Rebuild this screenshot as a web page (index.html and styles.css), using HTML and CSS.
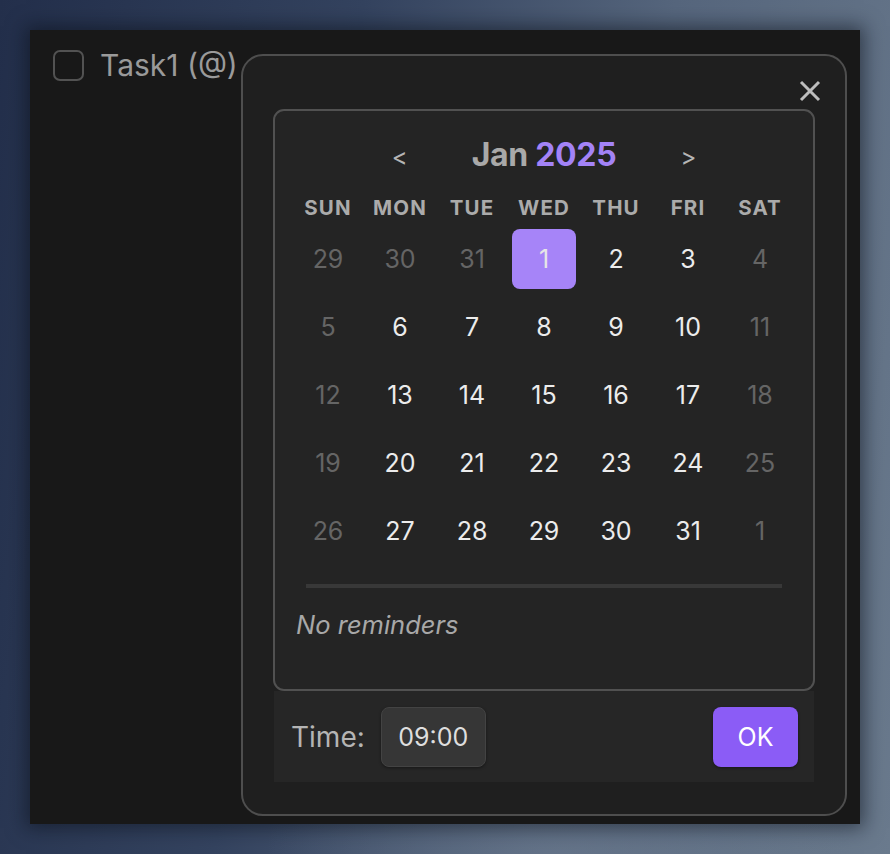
FILE: index.html
```html
<!DOCTYPE html>
<html lang="en">
<head>
<meta charset="utf-8">
<title>Reminder picker</title>
<link rel="stylesheet" href="styles.css">
</head>
<body>
<div class="panel">
  <div class="task">
    <span class="checkbox"></span>
    <span class="task-text">Task1 (@)</span>
  </div>

  <div class="modal">
    <div class="modal-top">
      <button class="close" aria-label="Close">
        <svg width="22" height="22" viewBox="0 0 22 22"><path d="M2 2 L20 20 M20 2 L2 20" stroke="#bdbdbd" stroke-width="3" stroke-linecap="butt" fill="none"/></svg>
      </button>
    </div>

    <div class="calendar">
      <div class="cal-head">
        <button class="nav">&lt;</button>
        <div class="title"><span class="month">Jan</span> <span class="year">2025</span></div>
        <button class="nav">&gt;</button>
      </div>

      <div class="grid">
        <div class="wd">SUN</div><div class="wd">MON</div><div class="wd">TUE</div><div class="wd">WED</div><div class="wd">THU</div><div class="wd">FRI</div><div class="wd">SAT</div>

        <div class="day out">29</div><div class="day out">30</div><div class="day out">31</div><div class="day sel">1</div><div class="day">2</div><div class="day">3</div><div class="day out">4</div>
        <div class="day out">5</div><div class="day">6</div><div class="day">7</div><div class="day">8</div><div class="day">9</div><div class="day">10</div><div class="day out">11</div>
        <div class="day out">12</div><div class="day">13</div><div class="day">14</div><div class="day">15</div><div class="day">16</div><div class="day">17</div><div class="day out">18</div>
        <div class="day out">19</div><div class="day">20</div><div class="day">21</div><div class="day">22</div><div class="day">23</div><div class="day">24</div><div class="day out">25</div>
        <div class="day out">26</div><div class="day">27</div><div class="day">28</div><div class="day">29</div><div class="day">30</div><div class="day">31</div><div class="day out">1</div>
      </div>

      <div class="divider"></div>
      <div class="reminders">No reminders</div>
    </div>

    <div class="footer">
      <span class="time-label">Time:</span>
      <span class="time-box">09:00</span>
      <button class="ok">OK</button>
    </div>
  </div>
</div>
</body>
</html>
```

FILE: styles.css
```css
* { box-sizing: border-box; }

html, body {
  margin: 0;
  padding: 0;
}

body {
  width: 890px;
  height: 854px;
  overflow: hidden;
  font-family: "Inter", "Liberation Sans", sans-serif;
  background:
    radial-gradient(ellipse 420px 300px at 560px 860px, rgba(110,125,145,0.55), rgba(110,125,145,0) 70%),
    linear-gradient(100deg, #232f4b 0%, #34435f 35%, #56667d 65%, #6a7a8d 100%);
  padding: 30px;
}

.panel {
  position: relative;
  width: 830px;
  height: 794px;
  background: #181818;
  box-shadow: 0 0 18px 4px rgba(10, 14, 24, 0.55);
  padding: 20px 23px;
}

.task {
  display: flex;
  align-items: center;
  gap: 16px;
  height: 31px;
}

.checkbox {
  width: 31px;
  height: 31px;
  border: 2px solid #525252;
  border-radius: 7px;
  flex: none;
}

.task-text {
  font-size: 30px;
  color: #9a9a9a;
  line-height: 31px;
}

.modal {
  position: absolute;
  left: 211px;
  top: 24px;
  width: 606px;
  height: 762px;
  background: #1f1f1f;
  border: 2px solid #4e4e4e;
  border-radius: 22px;
  padding: 0 30px 32px;
  display: flex;
  flex-direction: column;
}

.modal-top {
  height: 53px;
  display: flex;
  justify-content: flex-end;
  align-items: flex-start;
  padding-top: 24px;
  margin-right: -6px;
}

.close {
  background: none;
  border: 0;
  padding: 0;
  width: 22px;
  height: 22px;
  display: block;
}
.close svg { display: block; }

.calendar {
  border: 2px solid #515151;
  border-radius: 11px;
  background: #242424;
  padding: 20px 21px 49px;
}

.cal-head {
  height: 48px;
  display: flex;
  align-items: center;
  justify-content: center;
  gap: 64px;
}

.nav {
  background: none;
  border: 0;
  padding: 0;
  font-family: "Inter", sans-serif;
  font-size: 24px;
  color: #b5b5b5;
  line-height: 1;
  margin-top: 4px;
}

.title {
  font-size: 32px;
  font-weight: 700;
  letter-spacing: -0.3px;
  line-height: 1;
}
.month { color: #a9a9a9; }
.year { color: #a383f7; }

.grid {
  margin-top: 16px;
  display: grid;
  grid-template-columns: repeat(7, 64px);
  grid-template-rows: 26px repeat(5, 60px);
  column-gap: 8px;
  row-gap: 8px;
}

.wd {
  font-size: 20.5px;
  font-weight: 700;
  color: #ababab;
  text-align: center;
  letter-spacing: 1.1px;
  line-height: 26px;
  white-space: nowrap;
  display: flex;
  justify-content: center;
}

.day {
  display: flex;
  align-items: center;
  justify-content: center;
  font-size: 25px;
  color: #ececec;
  border-radius: 8px;
}
.day.out { color: #656565; }
.day.sel {
  background: #a684f8;
  color: #e6e6e6;
}

.divider {
  height: 4px;
  background: #383838;
  margin: 23px 10px 0;
}

.reminders {
  margin-top: 22px;
  margin-left: 0;
  font-size: 25.5px;
  font-style: italic;
  color: #a8a8a8;
  line-height: 30px;
}

.footer {
  height: 91px;
  margin: 0 1px;
  background: #262626;
  display: flex;
  align-items: center;
  padding: 0 16px 0 17px;
}

.time-label {
  font-size: 28px;
  color: #b4b4b4;
}

.time-box {
  margin-left: 16px;
  width: 105px;
  height: 60px;
  border-radius: 8px;
  background: #363636;
  border: 1px solid #434343;
  box-shadow: 0 1px 3px rgba(0,0,0,0.4);
  display: flex;
  align-items: center;
  justify-content: center;
  font-size: 25px;
  color: #dedede;
}

.ok {
  margin-left: auto;
  width: 85px;
  height: 60px;
  border: 0;
  border-radius: 8px;
  background: #8b5cf6;
  color: #ffffff;
  font-family: "Inter", sans-serif;
  font-size: 25px;
  box-shadow: 0 1px 3px rgba(0,0,0,0.4);
}
```
